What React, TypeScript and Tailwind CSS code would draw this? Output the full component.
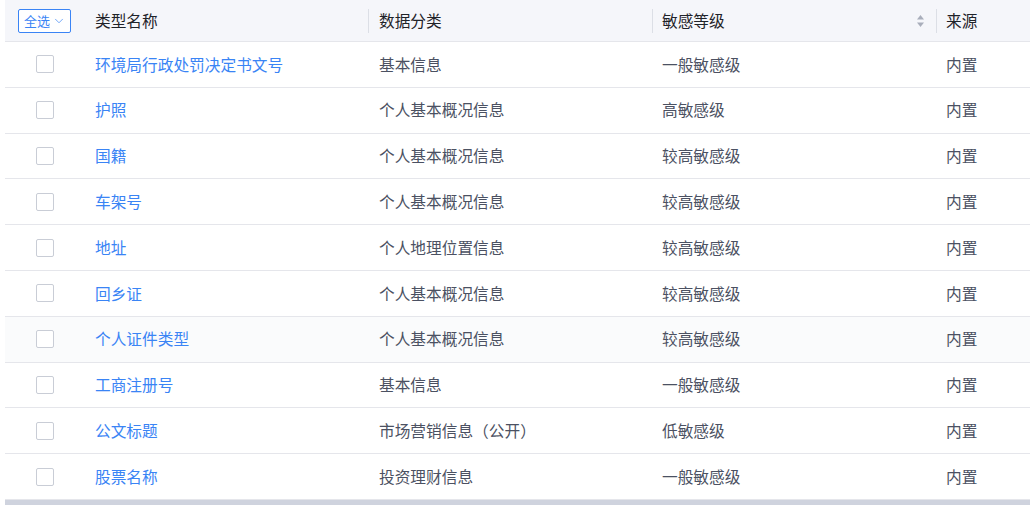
import { ChevronDown } from "lucide-react";

type Row = { name: string; category: string; level: string; source: string };

const rows: Row[] = [
  { name: "环境局行政处罚决定书文号", category: "基本信息", level: "一般敏感级", source: "内置" },
  { name: "护照", category: "个人基本概况信息", level: "高敏感级", source: "内置" },
  { name: "国籍", category: "个人基本概况信息", level: "较高敏感级", source: "内置" },
  { name: "车架号", category: "个人基本概况信息", level: "较高敏感级", source: "内置" },
  { name: "地址", category: "个人地理位置信息", level: "较高敏感级", source: "内置" },
  { name: "回乡证", category: "个人基本概况信息", level: "较高敏感级", source: "内置" },
  { name: "个人证件类型", category: "个人基本概况信息", level: "较高敏感级", source: "内置" },
  { name: "工商注册号", category: "基本信息", level: "一般敏感级", source: "内置" },
  { name: "公文标题", category: "市场营销信息（公开）", level: "低敏感级", source: "内置" },
  { name: "股票名称", category: "投资理财信息", level: "一般敏感级", source: "内置" },
];

const cols = "grid grid-cols-[78px_285px_284px_284px_1fr]";

function SortIcon() {
  return (
    <svg width="9" height="14" viewBox="0 0 9 14" className="text-[#a9aebb]">
      <path d="M4.5 1 L8 5.5 H1 Z" fill="currentColor" />
      <path d="M4.5 13 L8 8.5 H1 Z" fill="currentColor" />
    </svg>
  );
}

export default function App() {
  return (
    <div
      className="h-[505px] w-[1030px] overflow-hidden bg-white pl-[5px]"
      style={{ fontFamily: '"Noto Sans CJK SC", "Noto Sans", sans-serif' }}
    >
      <div className="flex h-[500px] flex-col">
        <div className={`${cols} h-[42px] items-center border-b border-[#e5e6eb] bg-[#f5f6fa] text-[15.7px] text-[#1f2329]`}>
          <div className="flex items-center pl-[13px]">
            <button className="flex h-[24px] w-[53px] items-center justify-center gap-[2px] rounded-[2px] border border-[#3a84f5] bg-white pl-[1px] text-[13px] text-[#3a84f5]">
              全选
              <ChevronDown size={14} strokeWidth={1.2} />
            </button>
          </div>
          <div className="pl-[12px]">类型名称</div>
          <div className="flex h-[24px] items-center border-l border-[#dcdfe6] pl-[10px]">数据分类</div>
          <div className="flex h-[24px] items-center justify-between border-l border-[#dcdfe6] pl-[9px] pr-[11px]">
            敏感等级
            <SortIcon />
          </div>
          <div className="flex h-[24px] items-center border-l border-[#dcdfe6] pl-[9px]">来源</div>
        </div>

        {rows.map((r, i) => (
          <div
            key={i}
            className={`${cols} h-[45.8px] items-center border-b border-[#e5e6eb] text-[15.7px] text-[#4b5162] ${
              i === 6 ? "bg-[#fafbfc]" : "bg-white"
            }`}
          >
            <div className="pl-[31px]">
              <div className="h-[18px] w-[18px] rounded-[2px] border border-[#c9cdd6] bg-white" />
            </div>
            <div className="pl-[12px] text-[#3a84f5]">{r.name}</div>
            <div className="pl-[11px]">{r.category}</div>
            <div className="pl-[10px]">{r.level}</div>
            <div className="pl-[10px]">{r.source}</div>
          </div>
        ))}
      </div>
      <div className="h-[5px] bg-[#cfd3de]" />
    </div>
  );
}
